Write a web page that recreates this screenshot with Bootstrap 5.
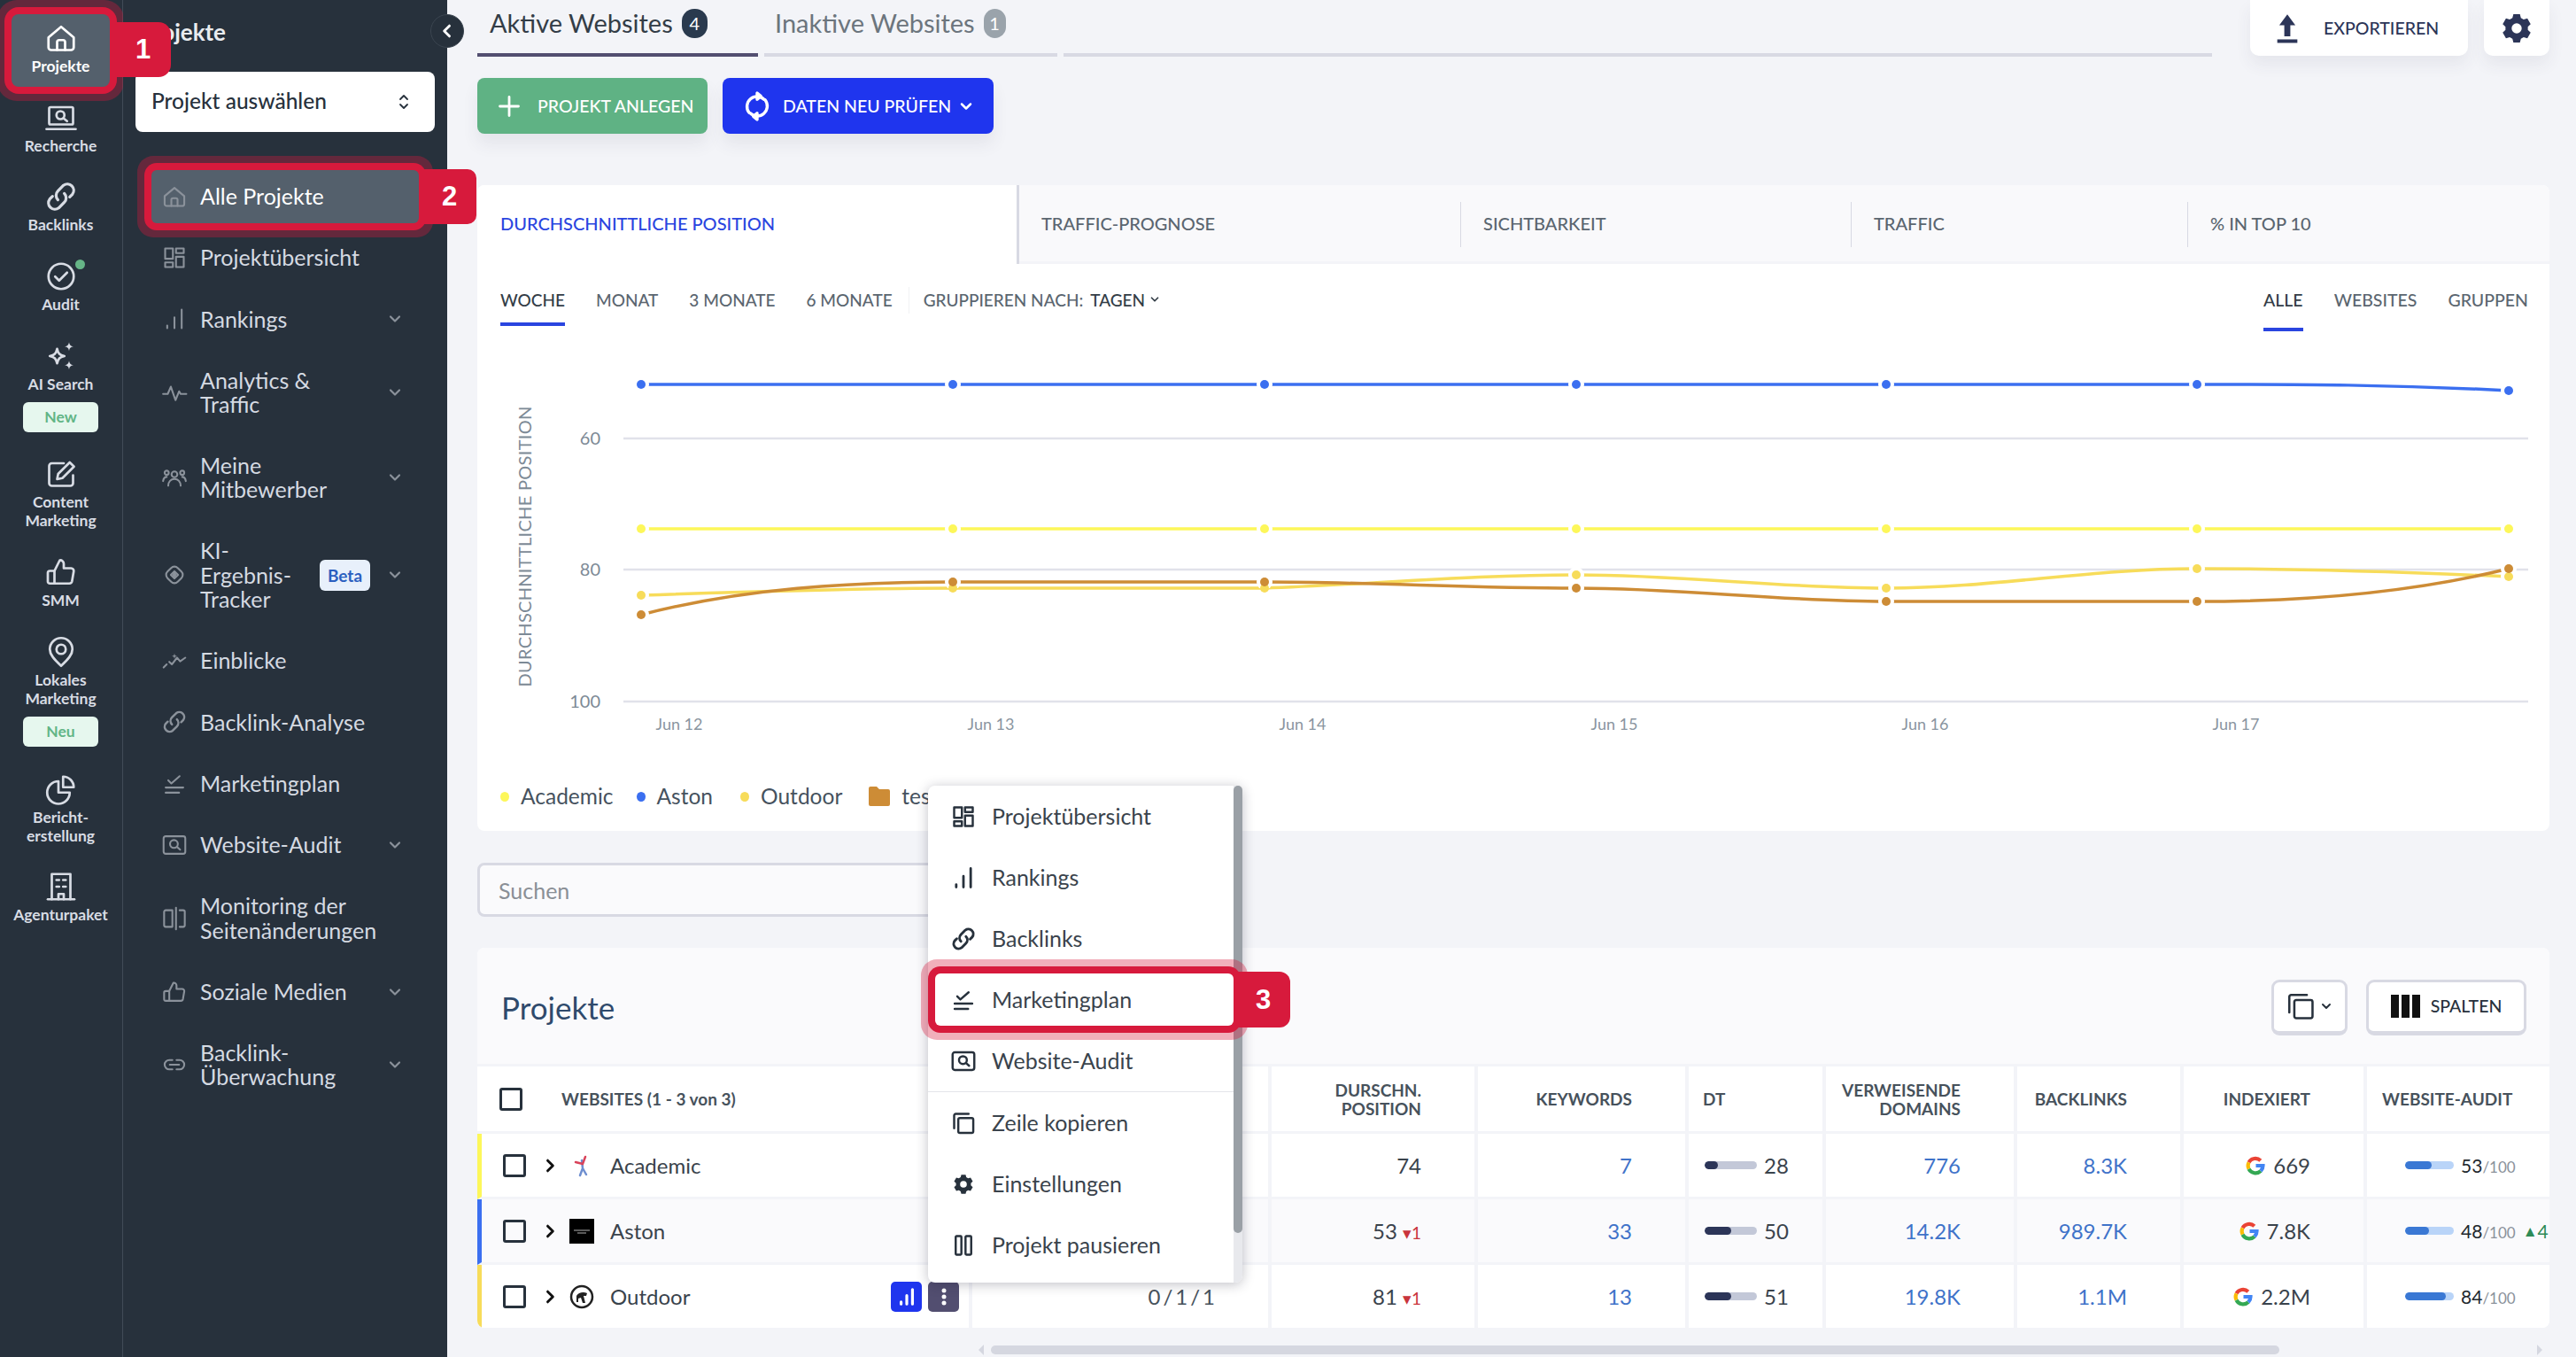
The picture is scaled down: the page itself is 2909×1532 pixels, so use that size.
<!DOCTYPE html>
<html lang="de">
<head>
<meta charset="utf-8">
<title>Projekte</title>
<link href="https://cdn.jsdelivr.net/npm/bootstrap@5.3.0/dist/css/bootstrap.min.css" rel="stylesheet">
<style>
html,body{height:100%}
body{font-family:Lato,"Liberation Sans",sans-serif;background:#f3f4f8;color:#38424c;overflow:hidden;width:2909px;height:1532px}
svg.ic{fill:none;stroke:currentColor;stroke-width:1.8;stroke-linecap:round;stroke-linejoin:round;flex:none;display:block}
.rail{width:139px;flex:none;background:#27313c;border-right:1px solid #414b57;padding:16px 1px 0 0;color:#d8dce4}
.rail-item{width:111px;margin-bottom:8.2px;padding:9px 0 12.5px;border-radius:8px;position:relative;text-decoration:none;color:inherit;font-weight:700;font-size:17.5px;line-height:21px;text-align:center}
.rail-item svg{margin:0 auto 3px;width:36px;height:36px}
.rail-item.on{background:#54606c;color:#fff}
.ring{box-shadow:0 0 0 8px #d71a3c,0 0 0 16px rgba(215,26,60,.35)}
.pill{display:block;width:85px;height:34px;line-height:34px;margin:10px auto 0;background:#e6f7ee;color:#62b586;border-radius:6px;font-size:17.5px}
.dot{position:absolute;left:72px;top:8px;width:11px;height:11px;border-radius:50%;background:#66b587}
.num{position:absolute;background:#d71a3c;color:#fff;font:700 31px "Liberation Sans",sans-serif;display:flex;align-items:center;justify-content:center;z-index:5}
.n1{left:100%;top:9px;width:69px;height:62px;border-radius:0 14px 14px 0;padding-left:6px}
.n2{left:100%;top:-1px;width:65px;height:62px;border-radius:0 10px 10px 0;padding-left:4px}
.n3{left:100%;top:-2px;width:64px;height:63px;border-radius:0 12px 12px 0;padding-left:3px}
.side{width:366px;flex:none;background:#27313c;padding:18px 14px 0;color:#d5dae2;position:relative}
.side-title{font-weight:700;font-size:26px;line-height:36px;color:#e9ecf0;margin:0 0 26.5px 4px}
.select{height:68.5px;width:338px;background:#fff;border-radius:8px;color:#27313c;font-size:24.5px;font-weight:500;padding:0 23px 0 18px;margin-bottom:43px}
.menu{margin-left:18px;width:302px;gap:9.8px}
.menu-item{padding:15.75px 17px 15.75px 8px;line-height:27.5px;font-size:25px;color:#d5dae2;border-radius:6px;text-decoration:none;position:relative}
.menu-item .mi{width:36px;height:28px;color:#8b929b;margin-right:11px;flex:none}
.menu-item.on{background:#54606c;color:#fff}
.chev{width:20px;height:20px;color:#8b929b;stroke-width:2.6!important}
.beta{background:#e8f0fb;color:#2b5fc0;font-weight:700;font-size:19px;height:35px;line-height:35px;width:57px;text-align:center;border-radius:6px;margin-right:18px;margin-left:auto}
.collapse-btn{position:absolute;left:347px;top:16px;width:38px;height:38px;border-radius:50%;background:#27313c;border:1px solid #3b4550;color:#fff;z-index:4}
.main{padding:0 30px 0 34px;position:relative;min-width:0}
.top-tab{height:64px;border-bottom:4px solid #d8d9e3;font-size:29px;color:#6c757d;padding-left:14px;padding-bottom:8px}
.top-tab.on{border-color:#524e70;color:#333d47}
.tab-a{width:317px}.tab-b{width:331px;margin-left:7px;padding-left:12px}.tab-c{flex:1;margin-left:7px}
.cnt{width:29px;height:33px;border-radius:14px;background:#2a3a4e;color:#fff;font-size:20px;margin-left:10px;text-align:center;line-height:33px}
.cnt.off{width:25px;background:#9aa3ab}
.tool{height:63px;background:#fff;border-radius:0 0 10px 10px;box-shadow:0 10px 18px rgba(60,60,90,.07);color:#2c3558;font-size:19.5px;font-weight:500;flex:none}
.tool-x{width:246px;margin-left:43px;padding-left:28px}
.tool-g{width:74px;margin-left:18px}
.act{height:63px;border-radius:8px;color:#fff;font-size:19.5px;font-weight:500;white-space:nowrap;box-shadow:0 12px 18px rgba(60,60,90,.08)}
.act-g{background:#5fb284;width:260px;padding-left:22px}
.act-b{background:#1f35ee;width:306px;padding:0 21px 0 22px;margin-left:17px}
.chart-card{margin-top:58px;height:729px;background:#fff;border-radius:8px;overflow:hidden}
.ctabs{height:89px;background:#f9f9fb;box-shadow:inset 0 -3px 0 #f3f4f8;font-size:20px;font-weight:500;color:#5b6670}
.ctab{height:51px;padding:0 0 3px 25px;border-right:1px solid #d8d9e3}
.ctab1{align-self:stretch;width:612px;background:#fff;color:#2a45e0;border-right:3px solid #d8d9e3;padding:0 0 3px 26px}
.w2{width:499px}.w3{width:441px}.w4{width:380px}.w5{flex:1;border:0}
.period{height:82px;padding:0 24px 0 26px;font-size:19px;font-weight:500;color:#5b6670}
.per{padding:29px 0 13px;line-height:24px;height:70px;border-bottom:4px solid transparent;white-space:nowrap}
.per.on{color:#333d47;border-color:#2a45e0}
.per2{height:76px;padding-bottom:19px;margin-left:35px;font-size:19.5px}
.legend{padding:12px 0 0 26px;font-size:24.5px;color:#46525e;line-height:34px}
.lg-dot{width:10px;height:11px;border-radius:50%;margin-right:13px;flex:none}
.search{margin-top:36px;width:540px;height:61px;background:#fafafc;border:3px solid #d8d9e3;border-radius:8px;font-size:25px;padding:0 21px;color:#3c454f}
.search::placeholder{color:#8a8f96}
.pcard{margin-top:35px;background:#fff;border-radius:8px;overflow:hidden}
.phead{height:134px;background:#fafafc;box-shadow:inset 0 -3px 0 #f3f4f8;padding:0 26px 0 27px}
.phead h2{font-size:35px;font-weight:400;color:#2f4a6c;margin:0}
.obtn{height:63px;background:#fff;border:3px solid #d8d9e3;border-bottom-width:5px;border-radius:9px;color:#27313c;font-size:19.5px;font-weight:500}
.ptable{table-layout:fixed;width:2340px;border-collapse:separate;border-spacing:0;margin:0;font-size:24px}
.ptable th,.ptable td{padding:0;background:#fff;vertical-align:middle;border-right:4px solid #f3f4f8;border-bottom:3px solid #f3f4f8;color:#3a434c;white-space:nowrap;overflow:hidden}
.ptable th{height:76px;font-size:19px;font-weight:700;line-height:21px;color:#47525c;text-align:right;padding-right:60px}
.ptable td{height:74px;text-align:right;padding-right:60px}
.ptable tr:last-child td{border-bottom:0;height:71px}
.ptable tr.alt td{background:#fafafc}
.ptable th:last-child,.ptable td:last-child{border-right:0}
.ptable .lft{text-align:left;padding-right:0}
.ptable td.lnk{color:#3f73c9}
.ptable td.c-y{border-left:5px solid #fdf75a}.ptable td.c-b{border-left:5px solid #3b6ff0}.ptable td.c-g{border-left:5px solid #f7dc5a}
.rowhead{padding-left:24px}
.ck{width:26px;height:26px;border:3px solid #27313c;border-radius:3px;display:block;flex:none}
.exp{margin:0 12px 0 17px;stroke-width:3.5!important;color:#111}
.nm{margin-left:18px}
.down{color:#c9343c;font-size:19px}
.dtc{padding-left:18px}.auc{padding-left:43px}
.bar{width:59px;height:9px;border-radius:5px;background:#c3c8d8;overflow:hidden;flex:none}
.bar i{display:block;height:100%;border-radius:5px;background:#2c3558}
.bar.b2{width:55px;background:#b9d4f8}.bar.b2 i{background:#3a78d4}
.score{font-size:21px;color:#22282e}.score small{font-size:17px;color:#8b929b}
.rb{width:35px;height:34px;border-radius:5px;color:#fff}
.rb-b{background:#1f35ee}.rb-p{background:#524e70}
.rbs{gap:7px;margin:0 11px 0 auto}
.hscroll{margin-top:20px;height:10px;padding-left:566px}
.thumb{width:1455px;height:10px;border-radius:5px;background:#d5d7e0}
.tri{width:0;height:0;border:6px solid transparent}
.ddm{position:absolute;left:543px;top:887px;width:355px;height:561px;padding:0;margin:0;border:0;border-radius:8px;background:#fff;box-shadow:0 2px 14px rgba(30,30,50,.28);z-index:6;font-size:25px}
.ddm .dropdown-item{height:69.1px;padding:0 0 0 24px;color:#3a434c;width:345px;background:none}
.ddm .dd-ic{width:32px;height:28px;margin-right:16px;color:#27313c;flex:none;stroke-width:2.1}
.ddm .dd-ic.sm{height:24px}
.ddm .marked{height:59.1px;margin:5px 0 5px 8px;width:337px;padding-left:16px;background:#fff;border-radius:6px;position:relative;z-index:3}
.ddm hr{margin:0;border-color:#e4e5ea;opacity:1;width:345px}
.sbar{position:absolute;right:0;top:0;bottom:0;width:10px;background:#e8e9ed;border-radius:0 8px 8px 0}
.sbar i{display:block;height:505px;background:#9aa0a6;border-radius:5px}
.ax{font-size:20px;fill:#7d8a96}
.jun{font-size:18px;fill:#8a95a0}
.axt{font-size:20px;fill:#7d8a96;letter-spacing:.3px}
</style>
</head>
<body class="d-flex">
<svg width="0" height="0" class="position-absolute">
<defs>
<symbol id="i-home" viewBox="0 0 24 24"><path d="M2.5 11.5 12 3.5l9.5 8V19a2 2 0 0 1-2 2h-15a2 2 0 0 1-2-2z"/><path d="M9 21v-6a1.5 1.5 0 0 1 1.5-1.5h3A1.5 1.5 0 0 1 15 15v6"/></symbol>
<symbol id="i-research" viewBox="0 0 24 24"><rect x="3" y="4" width="18" height="13" rx="1"/><path d="M1 20.5h22"/><circle cx="11.5" cy="10" r="3"/><path d="M14 12.5l2.5 2"/></symbol>
<symbol id="i-link" viewBox="2 2 20 20"><path d="M10 14a4 4 0 0 1 0-5.6l3.5-3.5a4 4 0 0 1 5.600 5.600l-1.700 1.700"/><path d="M14 10a4 4 0 0 1 0 5.600l-3.500 3.500a4 4 0 0 1-5.600-5.600l1.700-1.700"/></symbol>
<symbol id="i-audit" viewBox="0 0 24 24"><circle cx="12" cy="12" r="9.500"/><path d="M7.500 12.200l3 3 6-6"/></symbol>
<symbol id="i-spark" viewBox="0 0 24 24"><path d="M9 6.500c.8 3.700 1.900 4.700 5.500 5.500-3.600.8-4.700 1.800-5.500 5.500-.8-3.700-1.900-4.700-5.500-5.500 3.600-.8 4.700-1.800 5.500-5.500z"/><path fill="currentColor" stroke="none" d="M18 1.500c.4 2.200 1.100 2.900 3.300 3.300-2.200.4-2.900 1.100-3.300 3.300-.4-2.200-1.100-2.900-3.300-3.300 2.200-.4 2.900-1.100 3.300-3.300zM18 15.500c.4 2.200 1.100 2.900 3.300 3.300-2.200.4-2.900 1.100-3.300 3.300-.4-2.200-1.100-2.900-3.300-3.300 2.200-.4 2.900-1.100 3.300-3.300z"/></symbol>
<symbol id="i-edit" viewBox="0 0 24 24"><path d="M21 13v6a2 2 0 0 1-2 2H5a2 2 0 0 1-2-2V6a2 2 0 0 1 2-2h9"/><path d="M9 16l.8-4 8.700-8.700 3.200 3.200-8.700 8.700z"/></symbol>
<symbol id="i-thumb" viewBox="0 0 24 24"><path d="M7 11v9.500H3.500a1.500 1.500 0 0 1-1.500-1.500v-6.500A1.500 1.500 0 0 1 3.500 11z"/><path d="M7 11l4-8a2.600 2.600 0 0 1 3 2.600V9h5.500a2 2 0 0 1 2 2.400l-1.300 7.500a2 2 0 0 1-2 1.600H7"/></symbol>
<symbol id="i-pin" viewBox="0 0 24 24"><path d="M12 22.500C6.500 17.500 3.500 14 3.500 10a8.500 8.500 0 0 1 17 0c0 4-3 7.500-8.500 12.500z"/><circle cx="12" cy="10" r="3.500"/></symbol>
<symbol id="i-pie" viewBox="0 0 24 24"><path d="M10 6A8.500 8.500 0 1 0 18.500 14.500H10z"/><path d="M13.500 2.500A8 8 0 0 1 21.500 10.500H13.500z"/></symbol>
<symbol id="i-building" viewBox="0 0 24 24"><path d="M5 21.500V2.500h14v19"/><path d="M2 21.500h20"/><path d="M10 21.500v-4h4v4"/><path d="M8.500 7h2M13.500 7h2M8.500 12h2M13.500 12h2"/></symbol>
<symbol id="i-grid" viewBox="0 0 24 24"><rect x="3" y="3" width="7.500" height="10"/><rect x="3" y="16.500" width="7.500" height="4.500"/><rect x="13.500" y="3" width="7.500" height="4.500"/><rect x="13.500" y="11" width="7.500" height="10"/></symbol>
<symbol id="i-bars" viewBox="0 0 24 24"><path d="M5 21v-2.500M12 21V10.500M19 21V3"/></symbol>
<symbol id="i-pulse" viewBox="0 0 24 24"><path d="M1 13.500h4.500l3-7 4.500 13 3.500-8.500 1.500 2.500h5.500"/></symbol>
<symbol id="i-people" viewBox="0 0 24 24"><circle cx="12" cy="9" r="2.800"/><circle cx="4.500" cy="7.500" r="2"/><circle cx="19.500" cy="7.500" r="2"/><path d="M6 20c0-3.800 2.500-6.500 6-6.500s6 2.700 6 6.500"/><path d="M1 15.500c.4-2.500 1.800-4 3.500-4M23 15.500c-.4-2.500-1.800-4-3.500-4"/></symbol>
<symbol id="i-ai" viewBox="0 0 24 24"><rect x="5" y="5" width="14" height="14" rx="4.500" transform="rotate(45 12 12)"/><path d="M12 8.500l3.500 3.500-3.500 3.500-3.500-3.500z"/><circle cx="12" cy="12" r="1" fill="currentColor"/></symbol>
<symbol id="i-trend" viewBox="0 0 24 24"><path d="M1.500 18.500l3-3M7 13l2.500 2.500 5-6.500 3 3.500 5-3.500"/><path fill="currentColor" stroke="none" d="M12 5l.6 1.900 1.900.6-1.900.6-.6 1.900-.6-1.900-1.900-.6 1.900-.6z"/></symbol>
<symbol id="i-plan" viewBox="0 0 24 24"><path d="M6 8.500l3 3 8-7"/><path d="M3.500 15.500h17M3.500 20.500h13"/></symbol>
<symbol id="i-audit2" viewBox="0 0 24 24"><rect x="1.500" y="3.500" width="21" height="17" rx="2"/><circle cx="11.500" cy="11" r="3.800"/><path d="M14.500 13.800l3 2.700"/></symbol>
<symbol id="i-monitor" viewBox="0 0 24 24"><path d="M10 4H3.500A1.500 1.500 0 0 0 2 5.500v13A1.500 1.500 0 0 0 3.500 20H10z"/><path d="M13.500 1.500v21"/><path d="M17 4h3.500A1.500 1.500 0 0 1 22 5.500v13a1.500 1.500 0 0 1-1.500 1.500H17"/></symbol>
<symbol id="i-hlink" viewBox="0 0 24 24"><path d="M10 7.500H7a4.500 4.500 0 0 0 0 9h3M14 7.500h3a4.500 4.500 0 0 1 0 9h-3M7.500 12h9"/></symbol>
<symbol id="i-copy" viewBox="0 0 24 24"><rect x="7" y="7" width="14.500" height="14.500" rx="1.500"/><path d="M3 17V4.500A1.500 1.500 0 0 1 4.500 3H17"/></symbol>
<symbol id="i-pause" viewBox="0 0 24 24"><rect x="4.500" y="3" width="5.500" height="18" rx=".8"/><rect x="14" y="3" width="5.500" height="18" rx=".8"/></symbol>
<symbol id="i-chev" viewBox="0 0 24 24"><path d="M6 9l6 6 6-6"/></symbol>
<symbol id="i-chr" viewBox="0 0 24 24"><path d="M9 5l7 7-7 7"/></symbol>
<symbol id="i-chl" viewBox="0 0 24 24"><path d="M15 5l-7 7 7 7"/></symbol>
<symbol id="i-sel" viewBox="0 0 24 24"><path d="M8 9l4-4 4 4M8 15l4 4 4-4"/></symbol>
<symbol id="i-gear" viewBox="0 0 24 24"><path fill="currentColor" stroke="none" fill-rule="evenodd" d="M8.820 4.120L9.530 1.280H14.470L15.180 4.120 17.230 5.300 20.040 4.500 22.520 8.780 20.420 10.820V13.180L22.520 15.220 20.040 19.500 17.230 18.700 15.180 19.880 14.470 22.720H9.530L8.820 19.880 6.770 18.700 3.960 19.500 1.480 15.220 3.580 13.180V10.820L1.480 8.780 3.960 4.500 6.770 5.300zM12 8.200a3.800 3.800 0 1 0 0 7.600 3.800 3.800 0 0 0 0-7.600z"/></symbol>
<symbol id="i-g" viewBox="0 0 24 24"><g fill="none" stroke-width="4.200"><path stroke="#ea4335" d="M17.800 6.200A8.500 8.500 0 0 0 4.500 8.300"/><path stroke="#fbbc05" d="M4.500 8.300A8.500 8.500 0 0 0 4.500 15.700"/><path stroke="#34a853" d="M4.500 15.700A8.500 8.500 0 0 0 18 18"/><path stroke="#4285f4" d="M18 18A8.500 8.500 0 0 0 20.500 12H12.500"/></g></symbol>
</defs>
</svg>

<!-- Icon rail -->
<nav class="rail d-flex flex-column align-items-center">
  <a class="rail-item on ring"><svg class="ic"><use href="#i-home"/></svg>Projekte<span class="num n1">1</span></a>
  <a class="rail-item"><svg class="ic"><use href="#i-research"/></svg>Recherche</a>
  <a class="rail-item"><svg class="ic"><use href="#i-link"/></svg>Backlinks</a>
  <a class="rail-item"><svg class="ic"><use href="#i-audit"/></svg>Audit<span class="dot"></span></a>
  <a class="rail-item"><svg class="ic"><use href="#i-spark"/></svg>AI Search<span class="pill">New</span></a>
  <a class="rail-item"><svg class="ic"><use href="#i-edit"/></svg>Content Marketing</a>
  <a class="rail-item"><svg class="ic"><use href="#i-thumb"/></svg>SMM</a>
  <a class="rail-item"><svg class="ic"><use href="#i-pin"/></svg>Lokales Marketing<span class="pill">Neu</span></a>
  <a class="rail-item"><svg class="ic"><use href="#i-pie"/></svg>Bericht-<br>erstellung</a>
  <a class="rail-item"><svg class="ic"><use href="#i-building"/></svg>Agenturpaket</a>
</nav>

<!-- Sidebar -->
<aside class="side">
  <div class="side-title">Projekte</div>
  <div class="select d-flex align-items-center justify-content-between">Projekt auswählen<svg class="ic" width="24" height="24"><use href="#i-sel"/></svg></div>
  <div class="menu d-flex flex-column">
    <a class="menu-item on ring d-flex align-items-center"><svg class="ic mi"><use href="#i-home"/></svg>Alle Projekte<span class="num n2">2</span></a>
    <a class="menu-item d-flex align-items-center"><svg class="ic mi"><use href="#i-grid"/></svg>Projektübersicht</a>
    <a class="menu-item d-flex align-items-center"><svg class="ic mi"><use href="#i-bars"/></svg>Rankings<svg class="ic chev ms-auto"><use href="#i-chev"/></svg></a>
    <a class="menu-item d-flex align-items-center"><svg class="ic mi"><use href="#i-pulse"/></svg><span>Analytics &amp;<br>Traffic</span><svg class="ic chev ms-auto"><use href="#i-chev"/></svg></a>
    <a class="menu-item d-flex align-items-center"><svg class="ic mi"><use href="#i-people"/></svg><span>Meine<br>Mitbewerber</span><svg class="ic chev ms-auto"><use href="#i-chev"/></svg></a>
    <a class="menu-item d-flex align-items-center"><svg class="ic mi"><use href="#i-ai"/></svg><span>KI-<br>Ergebnis-<br>Tracker</span><span class="beta">Beta</span><svg class="ic chev"><use href="#i-chev"/></svg></a>
    <a class="menu-item d-flex align-items-center"><svg class="ic mi"><use href="#i-trend"/></svg>Einblicke</a>
    <a class="menu-item d-flex align-items-center"><svg class="ic mi"><use href="#i-link"/></svg>Backlink-Analyse</a>
    <a class="menu-item d-flex align-items-center"><svg class="ic mi"><use href="#i-plan"/></svg>Marketingplan</a>
    <a class="menu-item d-flex align-items-center"><svg class="ic mi"><use href="#i-audit2"/></svg>Website-Audit<svg class="ic chev ms-auto"><use href="#i-chev"/></svg></a>
    <a class="menu-item d-flex align-items-center"><svg class="ic mi"><use href="#i-monitor"/></svg><span>Monitoring der<br>Seitenänderungen</span></a>
    <a class="menu-item d-flex align-items-center"><svg class="ic mi"><use href="#i-thumb"/></svg>Soziale Medien<svg class="ic chev ms-auto"><use href="#i-chev"/></svg></a>
    <a class="menu-item d-flex align-items-center"><svg class="ic mi"><use href="#i-hlink"/></svg><span>Backlink-<br>Überwachung</span><svg class="ic chev ms-auto"><use href="#i-chev"/></svg></a>
  </div>
  <button class="collapse-btn btn p-0 d-flex align-items-center justify-content-center" type="button" aria-label="Einklappen"><svg class="ic" width="20" height="20" style="stroke-width:3.500"><use href="#i-chl"/></svg></button>
</aside>

<!-- Main -->
<main class="main flex-grow-1">
  <div class="d-flex align-items-start">
    <div class="top-tab tab-a on d-flex align-items-center">Aktive Websites<span class="cnt">4</span></div>
    <div class="top-tab tab-b d-flex align-items-center">Inaktive Websites<span class="cnt off">1</span></div>
    <div class="top-tab tab-c"></div>
    <div class="tool tool-x d-flex align-items-center"><svg width="28" height="34" viewBox="0 0 24 30" style="margin-right:27px" fill="#2c3558"><path d="M12 1l8 11h-5v11H9V12H4z"/><rect x="2" y="26" width="20" height="3.500"/></svg>EXPORTIEREN</div>
    <div class="tool tool-g d-flex align-items-center justify-content-center"><svg class="ic" width="36" height="36"><use href="#i-gear"/></svg></div>
  </div>
  <div class="d-flex" style="margin-top:24px">
    <div class="act act-g d-flex align-items-center"><svg width="28" height="28" viewBox="0 0 24 24" class="ic" style="stroke-width:2.400;margin-right:18px"><path d="M12 3v18M3 12h18"/></svg>PROJEKT ANLEGEN</div>
    <div class="act act-b d-flex align-items-center"><svg width="34" height="38" viewBox="0 0 24 24" class="ic me-2" style="stroke-width:2.400"><path d="M17.500 6.500A8 8 0 0 0 5.500 17"/><path d="M6.500 17.500A8 8 0 0 0 18.500 7"/><path fill="currentColor" d="M12 1.500v5l3-2.500zM12 22.500v-5l-3 2.500z"/></svg><span class="ms-1">DATEN NEU PRÜFEN</span><svg class="ic ms-auto" width="20" height="20" style="stroke-width:3"><use href="#i-chev"/></svg></div>
  </div>

  <section class="chart-card">
    <div class="ctabs d-flex align-items-center">
      <div class="ctab1 d-flex align-items-center">DURCHSCHNITTLICHE POSITION</div>
      <div class="ctab w2 d-flex align-items-center">TRAFFIC-PROGNOSE</div>
      <div class="ctab w3 d-flex align-items-center">SICHTBARKEIT</div>
      <div class="ctab w4 d-flex align-items-center">TRAFFIC</div>
      <div class="ctab w5 d-flex align-items-center">% IN TOP 10</div>
    </div>
    <div class="period d-flex justify-content-between align-items-start">
      <div class="d-flex align-items-start">
        <span class="per on">WOCHE</span>
        <span class="per" style="margin-left:35px">MONAT</span>
        <span class="per" style="margin-left:35px">3 MONATE</span>
        <span class="per" style="margin-left:35px">6 MONATE</span>
        <span class="vr" style="margin:26px 16px 0 18px;height:30px;color:#c8cad3"></span>
        <span class="per">GRUPPIEREN NACH:<span class="ms-2" style="color:#333d47">TAGEN</span></span>
        <svg class="ic" width="14" height="14" style="margin:33px 0 0 4px;stroke-width:3;color:#333d47"><use href="#i-chev"/></svg>
      </div>
      <div class="d-flex align-items-start">
        <span class="per per2 on">ALLE</span>
        <span class="per per2">WEBSITES</span>
        <span class="per per2">GRUPPEN</span>
      </div>
    </div>
    <svg class="d-block" width="2340" height="490" viewBox="539 380 2340 490" role="img" aria-label="Durchschnittliche Position">
      <g stroke="#e1e2ea" stroke-width="2.500">
        <path d="M704 495H2855M704 643H2855M704 792H2855"/>
      </g>
      <g text-anchor="end">
        <text x="678" y="502" class="ax">60</text>
        <text x="678" y="650" class="ax">80</text>
        <text x="678" y="799" class="ax">100</text>
      </g>
      <text class="axt" transform="translate(600 617) rotate(-90)" text-anchor="middle">DURCHSCHNITTLICHE POSITION</text>
      <g text-anchor="middle">
        <text x="767" y="824" class="jun">Jun 12</text>
        <text x="1119" y="824" class="jun">Jun 13</text>
        <text x="1471" y="824" class="jun">Jun 14</text>
        <text x="1823" y="824" class="jun">Jun 15</text>
        <text x="2174" y="824" class="jun">Jun 16</text>
        <text x="2525" y="824" class="jun">Jun 17</text>
      </g>
      <g fill="none" stroke-width="3.500">
        <path stroke="#3b6ff0" d="M724 434H2481C2600 434 2700 434 2833 441"/>
        <path stroke="#fdf75a" d="M724 597H2833"/>
        <path stroke="#f7dc5a" d="M724 672C840 668 960 664 1076 664S1310 664 1428 664C1545 660 1660 649 1780 649C1900 649 2010 664 2130 664C2250 664 2360 642 2481 642C2600 642 2720 646 2833 651"/>
        <path stroke="#cd8c36" d="M724 694C840 664 960 657 1076 657S1310 657 1428 657C1545 657 1660 664 1780 664C1900 664 2010 679 2130 679H2481C2600 679 2720 670 2833 642"/>
      </g>
      <g fill="#fff">
        <circle cx="724" cy="434" r="9"/><circle cx="1076" cy="434" r="9"/><circle cx="1428" cy="434" r="9"/><circle cx="1780" cy="434" r="9"/><circle cx="2130" cy="434" r="9"/><circle cx="2481" cy="434" r="9"/><circle cx="2833" cy="441" r="9"/>
        <circle cx="724" cy="597" r="9"/><circle cx="1076" cy="597" r="9"/><circle cx="1428" cy="597" r="9"/><circle cx="1780" cy="597" r="9"/><circle cx="2130" cy="597" r="9"/><circle cx="2481" cy="597" r="9"/><circle cx="2833" cy="597" r="9"/>
        <circle cx="724" cy="672" r="9"/><circle cx="1780" cy="649" r="9"/><circle cx="2130" cy="664" r="9"/><circle cx="2481" cy="642" r="9"/><circle cx="2833" cy="651" r="9"/>
        <circle cx="724" cy="694" r="9"/><circle cx="1076" cy="657" r="9"/><circle cx="1428" cy="657" r="9"/><circle cx="1780" cy="664" r="9"/><circle cx="2130" cy="679" r="9"/><circle cx="2481" cy="679" r="9"/><circle cx="2833" cy="642" r="9"/>
      </g>
      <g fill="#3b6ff0"><circle cx="724" cy="434" r="5"/><circle cx="1076" cy="434" r="5"/><circle cx="1428" cy="434" r="5"/><circle cx="1780" cy="434" r="5"/><circle cx="2130" cy="434" r="5"/><circle cx="2481" cy="434" r="5"/><circle cx="2833" cy="441" r="5"/></g>
      <g fill="#fdf75a"><circle cx="724" cy="597" r="5"/><circle cx="1076" cy="597" r="5"/><circle cx="1428" cy="597" r="5"/><circle cx="1780" cy="597" r="5"/><circle cx="2130" cy="597" r="5"/><circle cx="2481" cy="597" r="5"/><circle cx="2833" cy="597" r="5"/></g>
      <g fill="#f7dc5a"><circle cx="724" cy="672" r="5"/><circle cx="1076" cy="664" r="5"/><circle cx="1428" cy="664" r="5"/><circle cx="1780" cy="649" r="5"/><circle cx="2130" cy="664" r="5"/><circle cx="2481" cy="642" r="5"/><circle cx="2833" cy="651" r="5"/></g>
      <g fill="#cd8c36"><circle cx="724" cy="694" r="5"/><circle cx="1076" cy="657" r="5"/><circle cx="1428" cy="657" r="5"/><circle cx="1780" cy="664" r="5"/><circle cx="2130" cy="679" r="5"/><circle cx="2481" cy="679" r="5"/><circle cx="2833" cy="642" r="5"/></g>
    </svg>
    <div class="legend d-flex align-items-center">
      <span class="lg-dot" style="background:#fdf75a"></span><span style="margin-right:26px">Academic</span>
      <span class="lg-dot" style="background:#3b6ff0"></span><span style="margin-right:31px">Aston</span>
      <span class="lg-dot" style="background:#f7dc5a"></span><span style="margin-right:30px">Outdoor</span>
      <svg width="24" height="22" viewBox="0 0 24 22" fill="#cd8c36" style="margin-right:13px"><path d="M0 2a2 2 0 0 1 2-2h7l3 3h10a2 2 0 0 1 2 2v15a2 2 0 0 1-2 2H2a2 2 0 0 1-2-2z"/></svg><span>test</span>
    </div>
  </section>

  <input class="form-control search" type="text" placeholder="Suchen" aria-label="Suchen">

  <section class="pcard">
    <div class="phead d-flex align-items-center justify-content-between">
      <h2>Projekte</h2>
      <div class="d-flex align-items-center" style="gap:21px">
        <div class="obtn d-flex align-items-center justify-content-center" style="width:86px"><svg class="ic" width="34" height="34"><use href="#i-copy"/></svg><svg class="ic ms-1" width="16" height="16" style="stroke-width:3"><use href="#i-chev"/></svg></div>
        <div class="obtn d-flex align-items-center justify-content-center" style="width:181px"><svg width="33" height="26" viewBox="0 0 33 26" fill="#111" class="me-2"><rect width="9" height="26"/><rect x="12" width="9" height="26"/><rect x="24" width="9" height="26"/></svg><span class="ms-1">SPALTEN</span></div>
      </div>
    </div>
    <table class="table table-borderless ptable">
      <colgroup><col style="width:559px"><col style="width:338px"><col style="width:233px"><col style="width:238px"><col style="width:155px"><col style="width:216px"><col style="width:188px"><col style="width:207px"><col style="width:206px"></colgroup>
      <thead><tr>
        <th class="lft"><div class="d-flex align-items-center" style="padding-left:25px"><span class="ck"></span><span style="margin-left:44px">WEBSITES (1 - 3 von 3)</span></div></th>
        <th></th>
        <th>DURSCHN.<br>POSITION</th>
        <th>KEYWORDS</th>
        <th class="lft" style="padding-left:16px">DT</th>
        <th>VERWEISENDE<br>DOMAINS</th>
        <th>BACKLINKS</th>
        <th>INDEXIERT</th>
        <th class="lft" style="padding-left:17px">WEBSITE-AUDIT</th>
      </tr></thead>
      <tbody>
      <tr>
        <td class="lft c-y"><div class="rowhead d-flex align-items-center"><span class="ck"></span><svg class="ic exp" width="20" height="20"><use href="#i-chr"/></svg><svg width="28" height="28" viewBox="0 0 28 28" fill="none" stroke-width="2.500" stroke-linecap="round"><path stroke="#6f8fd0" d="M14 8l1 9-3 8M15 17l4 7"/><path stroke="#d9435a" d="M7 10l8 2 3-8"/></svg><span class="nm">Academic</span></div></td>
        <td></td><td>74</td><td class="lnk">7</td>
        <td class="lft"><div class="dtc d-flex align-items-center"><span class="bar"><i style="width:15px"></i></span><span class="ms-2">28</span></div></td>
        <td class="lnk">776</td><td class="lnk">8.3K</td>
        <td><div class="d-flex align-items-center justify-content-end"><svg width="24" height="24" class="me-2"><use href="#i-g"/></svg>669</div></td>
        <td class="lft"><div class="auc d-flex align-items-center"><span class="bar b2"><i style="width:30px"></i></span><span class="score ms-2">53<small>/100</small></span></div></td>
      </tr>
      <tr class="alt">
        <td class="lft c-b"><div class="rowhead d-flex align-items-center"><span class="ck"></span><svg class="ic exp" width="20" height="20"><use href="#i-chr"/></svg><svg width="28" height="28" viewBox="0 0 28 28"><rect width="28" height="28" fill="#000"/><path stroke="#777" stroke-width="1.500" d="M5 13h18M9 16h10"/></svg><span class="nm">Aston</span></div></td>
        <td></td><td>53 <span class="down">▾1</span></td><td class="lnk">33</td>
        <td class="lft"><div class="dtc d-flex align-items-center"><span class="bar"><i style="width:30px"></i></span><span class="ms-2">50</span></div></td>
        <td class="lnk">14.2K</td><td class="lnk">989.7K</td>
        <td><div class="d-flex align-items-center justify-content-end"><svg width="24" height="24" class="me-2"><use href="#i-g"/></svg>7.8K</div></td>
        <td class="lft"><div class="auc d-flex align-items-center"><span class="bar b2"><i style="width:27px"></i></span><span class="score ms-2">48<small>/100</small></span><span class="ms-2" style="color:#2e8b57;font-size:17px">▲</span><span style="color:#2e8b57;font-size:21px">4</span></div></td>
      </tr>
      <tr>
        <td class="lft c-g"><div class="rowhead d-flex align-items-center"><span class="ck"></span><svg class="ic exp" width="20" height="20"><use href="#i-chr"/></svg><svg width="28" height="28" viewBox="0 0 28 28"><circle cx="14" cy="14" r="12" fill="none" stroke="#222" stroke-width="2.500"/><path fill="#222" d="M8 13c2-4 8-5 12-3l-1 3-3 0 2 8h-3l-2-6-3 1 0 4H8z"/></svg><span class="nm">Outdoor</span><div class="rbs d-flex"><span class="rb rb-b d-flex align-items-center justify-content-center"><svg class="ic" width="22" height="22" style="stroke-width:3.500"><use href="#i-bars"/></svg></span><span class="rb rb-p d-flex align-items-center justify-content-center"><svg width="6" height="20" viewBox="0 0 6 20" fill="#fff"><circle cx="3" cy="3" r="2.500"/><circle cx="3" cy="10" r="2.500"/><circle cx="3" cy="17" r="2.500"/></svg></span></div></div></td>
        <td style="color:#47525c">0&thinsp;/&thinsp;1&thinsp;/&thinsp;1</td><td>81 <span class="down">▾1</span></td><td class="lnk">13</td>
        <td class="lft"><div class="dtc d-flex align-items-center"><span class="bar"><i style="width:30px"></i></span><span class="ms-2">51</span></div></td>
        <td class="lnk">19.8K</td><td class="lnk">1.1M</td>
        <td><div class="d-flex align-items-center justify-content-end"><svg width="24" height="24" class="me-2"><use href="#i-g"/></svg>2.2M</div></td>
        <td class="lft"><div class="auc d-flex align-items-center"><span class="bar b2"><i style="width:46px"></i></span><span class="score ms-2">84<small>/100</small></span></div></td>
      </tr>
      </tbody>
    </table>
  </section>
  <div class="hscroll d-flex align-items-center">
    <span class="tri" style="border-right-color:#d5d7e0;border-left-width:0;margin-right:8px"></span>
    <span class="thumb"></span>
    <span class="tri ms-auto" style="border-left-color:#d5d7e0;border-right-width:0;margin-right:8px"></span>
  </div>

  <div class="dropdown-menu show ddm">
    <span class="sbar"><i></i></span>
    <a class="dropdown-item d-flex align-items-center"><svg class="ic dd-ic"><use href="#i-grid"/></svg>Projektübersicht</a>
    <a class="dropdown-item d-flex align-items-center"><svg class="ic dd-ic" style="stroke-width:2.400"><use href="#i-bars"/></svg>Rankings</a>
    <a class="dropdown-item d-flex align-items-center"><svg class="ic dd-ic"><use href="#i-link"/></svg>Backlinks</a>
    <a class="dropdown-item marked ring d-flex align-items-center"><svg class="ic dd-ic"><use href="#i-plan"/></svg>Marketingplan<span class="num n3">3</span></a>
    <a class="dropdown-item d-flex align-items-center"><svg class="ic dd-ic"><use href="#i-audit2"/></svg>Website-Audit</a>
    <hr>
    <a class="dropdown-item d-flex align-items-center"><svg class="ic dd-ic"><use href="#i-copy"/></svg>Zeile kopieren</a>
    <a class="dropdown-item d-flex align-items-center"><svg class="ic dd-ic sm"><use href="#i-gear"/></svg>Einstellungen</a>
    <a class="dropdown-item d-flex align-items-center"><svg class="ic dd-ic"><use href="#i-pause"/></svg>Projekt pausieren</a>
  </div>
</main>
<script src="https://cdn.jsdelivr.net/npm/bootstrap@5.3.0/dist/js/bootstrap.bundle.min.js"></script>
</body>
</html>
